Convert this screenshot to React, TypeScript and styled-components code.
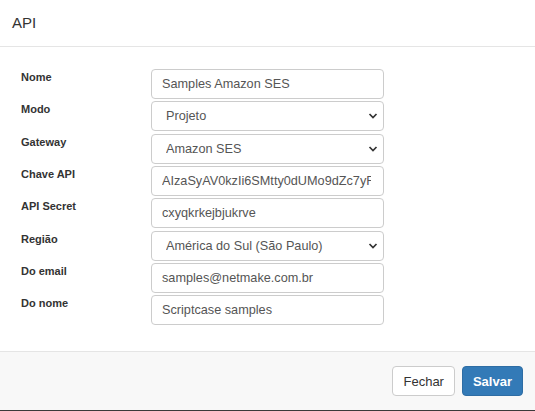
import React from "react";
import styled, { createGlobalStyle } from "styled-components";

const Global = createGlobalStyle`
  html, body { margin: 0; padding: 0; background: #fff; }
  body { font-family: "Liberation Sans", Arial, sans-serif; color: #333; }
  * { box-sizing: border-box; }
`;

const Modal = styled.div`
  width: 535px;
  height: 411px;
  display: flex;
  flex-direction: column;
  background: #fff;
`;

const Header = styled.div`
  height: 47px;
  padding: 0 12px;
  display: flex;
  align-items: center;
  border-bottom: 1px solid #e5e5e5;
`;

const Title = styled.h4`
  margin: 0 0 1px 0;
  font-size: 15px;
  font-weight: 400;
  color: #333;
`;

const Body = styled.div`
  flex: 1;
  padding: 22px 0 0 21px;
  display: flex;
  flex-direction: column;
  gap: 2.33px;
`;

const Row = styled.div`
  display: grid;
  grid-template-columns: 130px 233px;
  align-items: start;
`;

const Label = styled.label`
  font-size: 11px;
  font-weight: 700;
  line-height: 13px;
  padding-top: 2px;
  color: #333;
`;

const fieldBase = `
  width: 233px;
  height: 30px;
  border: 1px solid #ccc;
  border-radius: 4px;
  font-family: "Liberation Sans", Arial, sans-serif;
  font-size: 12.7px;
  color: #555;
  background: #fff;
  outline: none;
`;

const Input = styled.input`
  ${fieldBase}
  padding: 0 12px 0 10px;
`;

const SelectWrap = styled.div`
  position: relative;
  width: 233px;
  height: 30px;
`;

const Select = styled.select`
  ${fieldBase}
  appearance: none;
  padding: 0 30px 0 14px;
`;

const Chevron = styled.svg`
  position: absolute;
  right: 6px;
  top: 12px;
  pointer-events: none;
`;

const Footer = styled.div`
  height: 60px;
  border-top: 1px solid #e5e5e5;
  border-bottom: 1px solid #3a3a3a;
  background: #f8f8f8;
  display: flex;
  justify-content: flex-end;
  align-items: center;
  gap: 7px;
  padding: 0 12px 0 0;
`;

const Button = styled.button<{ $primary?: boolean }>`
  height: 30px;
  padding: 0 ${(p) => (p.$primary ? 10 : 10)}px;
  border-radius: 4px;
  font-family: "Liberation Sans", Arial, sans-serif;
  font-size: 13px;
  font-weight: ${(p) => (p.$primary ? 700 : 400)};
  color: ${(p) => (p.$primary ? "#fff" : "#333")};
  background: ${(p) => (p.$primary ? "#337ab7" : "#fff")};
  border: 1px solid ${(p) => (p.$primary ? "#2e6da4" : "#ccc")};
  cursor: pointer;
`;

type Field = { label: string; kind: "input" | "select"; value: string };

const fields: Field[] = [
  { label: "Nome", kind: "input", value: "Samples Amazon SES" },
  { label: "Modo", kind: "select", value: "Projeto" },
  { label: "Gateway", kind: "select", value: "Amazon SES" },
  { label: "Chave API", kind: "input", value: "AIzaSyAV0kzIi6SMtty0dUMo9dZc7yFxQ2bLkW" },
  { label: "API Secret", kind: "input", value: "cxyqkrkejbjukrve" },
  { label: "Região", kind: "select", value: "América do Sul (São Paulo)" },
  { label: "Do email", kind: "input", value: "samples@netmake.com.br" },
  { label: "Do nome", kind: "input", value: "Scriptcase samples" },
];

const ChevronIcon = () => (
  <Chevron width="10" height="6" viewBox="0 0 10 6">
    <path d="M1.5 1 L5 4.5 L8.5 1" fill="none" stroke="#333" strokeWidth="1.7" />
  </Chevron>
);

export default function App() {
  return (
    <>
      <Global />
      <Modal>
        <Header>
          <Title>API</Title>
        </Header>
        <Body>
          {fields.map((f) => (
            <Row key={f.label}>
              <Label>{f.label}</Label>
              {f.kind === "input" ? (
                <Input defaultValue={f.value} readOnly />
              ) : (
                <SelectWrap>
                  <Select defaultValue={f.value}>
                    <option>{f.value}</option>
                  </Select>
                  <ChevronIcon />
                </SelectWrap>
              )}
            </Row>
          ))}
        </Body>
        <Footer>
          <Button>Fechar</Button>
          <Button $primary>Salvar</Button>
        </Footer>
      </Modal>
    </>
  );
}
